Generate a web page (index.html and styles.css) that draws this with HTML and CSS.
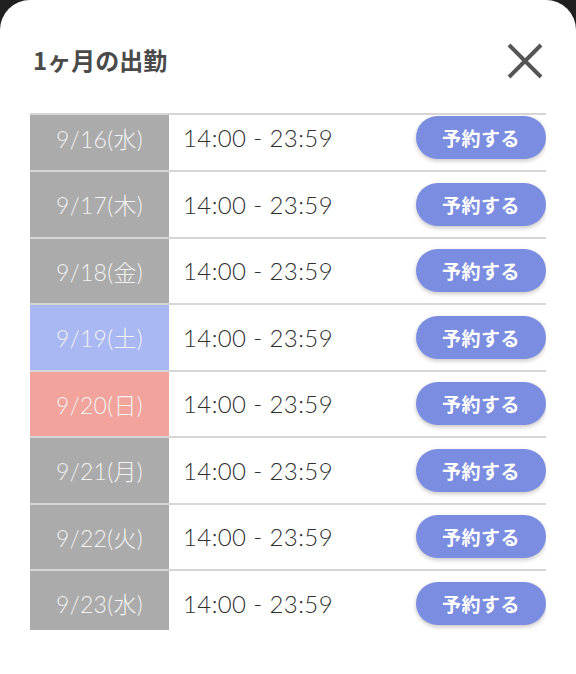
FILE: index.html
```html
<!DOCTYPE html>
<html lang="ja">
<head>
<meta charset="utf-8">
<link rel="stylesheet" href="styles.css">
</head>
<body>
<div class="sheet">
  <div class="header">
    <h1 class="title">1ヶ月の出勤</h1>
    <button class="close" aria-label="閉じる">
      <svg width="36" height="36" viewBox="0 0 36 36"><path d="M2 2 L34 34 M34 2 L2 34" stroke="#555" stroke-width="4" stroke-linecap="butt" fill="none"/></svg>
    </button>
  </div>
  <div class="scroller">
    <div class="list">
      <div class="row"><div class="date">9/16(水)</div><div class="time">14:00 - 23:59</div><button class="btn">予約する</button></div>
      <div class="row"><div class="date">9/17(木)</div><div class="time">14:00 - 23:59</div><button class="btn">予約する</button></div>
      <div class="row"><div class="date">9/18(金)</div><div class="time">14:00 - 23:59</div><button class="btn">予約する</button></div>
      <div class="row"><div class="date sat">9/19(土)</div><div class="time">14:00 - 23:59</div><button class="btn">予約する</button></div>
      <div class="row"><div class="date sun">9/20(日)</div><div class="time">14:00 - 23:59</div><button class="btn">予約する</button></div>
      <div class="row"><div class="date">9/21(月)</div><div class="time">14:00 - 23:59</div><button class="btn">予約する</button></div>
      <div class="row"><div class="date">9/22(火)</div><div class="time">14:00 - 23:59</div><button class="btn">予約する</button></div>
      <div class="row"><div class="date">9/23(水)</div><div class="time">14:00 - 23:59</div><button class="btn">予約する</button></div>
    </div>
  </div>
</div>
</body>
</html>
```
FILE: styles.css
```css
html, body {
  margin: 0;
  padding: 0;
  background: #202020;
  height: 674px;
  overflow: hidden;
}
.sheet {
  background: #ffffff;
  border-radius: 30px 30px 0 0;
  height: 674px;
  padding: 0 30px;
  box-sizing: border-box;
  font-family: Lato, "Noto Sans CJK JP", sans-serif;
}
.header {
  display: flex;
  justify-content: space-between;
  align-items: center;
  padding-top: 38px;
  height: 46px;
  margin-bottom: 29px;
  padding-right: 3px;
}
.title {
  margin: -4px 0 0 3px;
  font-family: "Noto Sans CJK JP", sans-serif;
  font-weight: 700;
  font-size: 24px;
  color: #4a4a4a;
}
.close {
  border: 0;
  background: none;
  padding: 0;
  width: 36px;
  height: 36px;
  display: flex;
}
.scroller {
  border-top: 2px solid #d6d6d6;
  height: 517px;
  box-sizing: border-box;
  overflow: hidden;
}
.list {
  margin-top: -9.5px;
}
.row {
  display: flex;
  align-items: stretch;
  height: 66.5px;
  box-sizing: border-box;
  border-bottom: 2px solid #d6d6d6;
}
.date {
  width: 139px;
  flex: none;
  background: #ababab;
  color: #f2f2f2;
  display: flex;
  align-items: center;
  justify-content: center;
  font-size: 23px;
  font-weight: 300;
  letter-spacing: 0.3px;
}
.date.sat { background: #a9b8f2; }
.date.sun { background: #f2a39b; }
.time {
  flex: 1;
  display: flex;
  align-items: center;
  padding-left: 14px;
  font-size: 24px;
  font-weight: 300;
  letter-spacing: 0.4px;
  color: #2e2e2e;
}
.btn {
  align-self: center;
  width: 130px;
  height: 43px;
  border: 0;
  border-radius: 22px;
  background: #7b8de1;
  color: #ffffff;
  font-family: "Noto Sans CJK JP", sans-serif;
  font-weight: 700;
  font-size: 19px;
  letter-spacing: 0.5px;
  box-shadow: 0 2px 4px rgba(0, 0, 0, 0.22);
  padding: 0;
}
```
